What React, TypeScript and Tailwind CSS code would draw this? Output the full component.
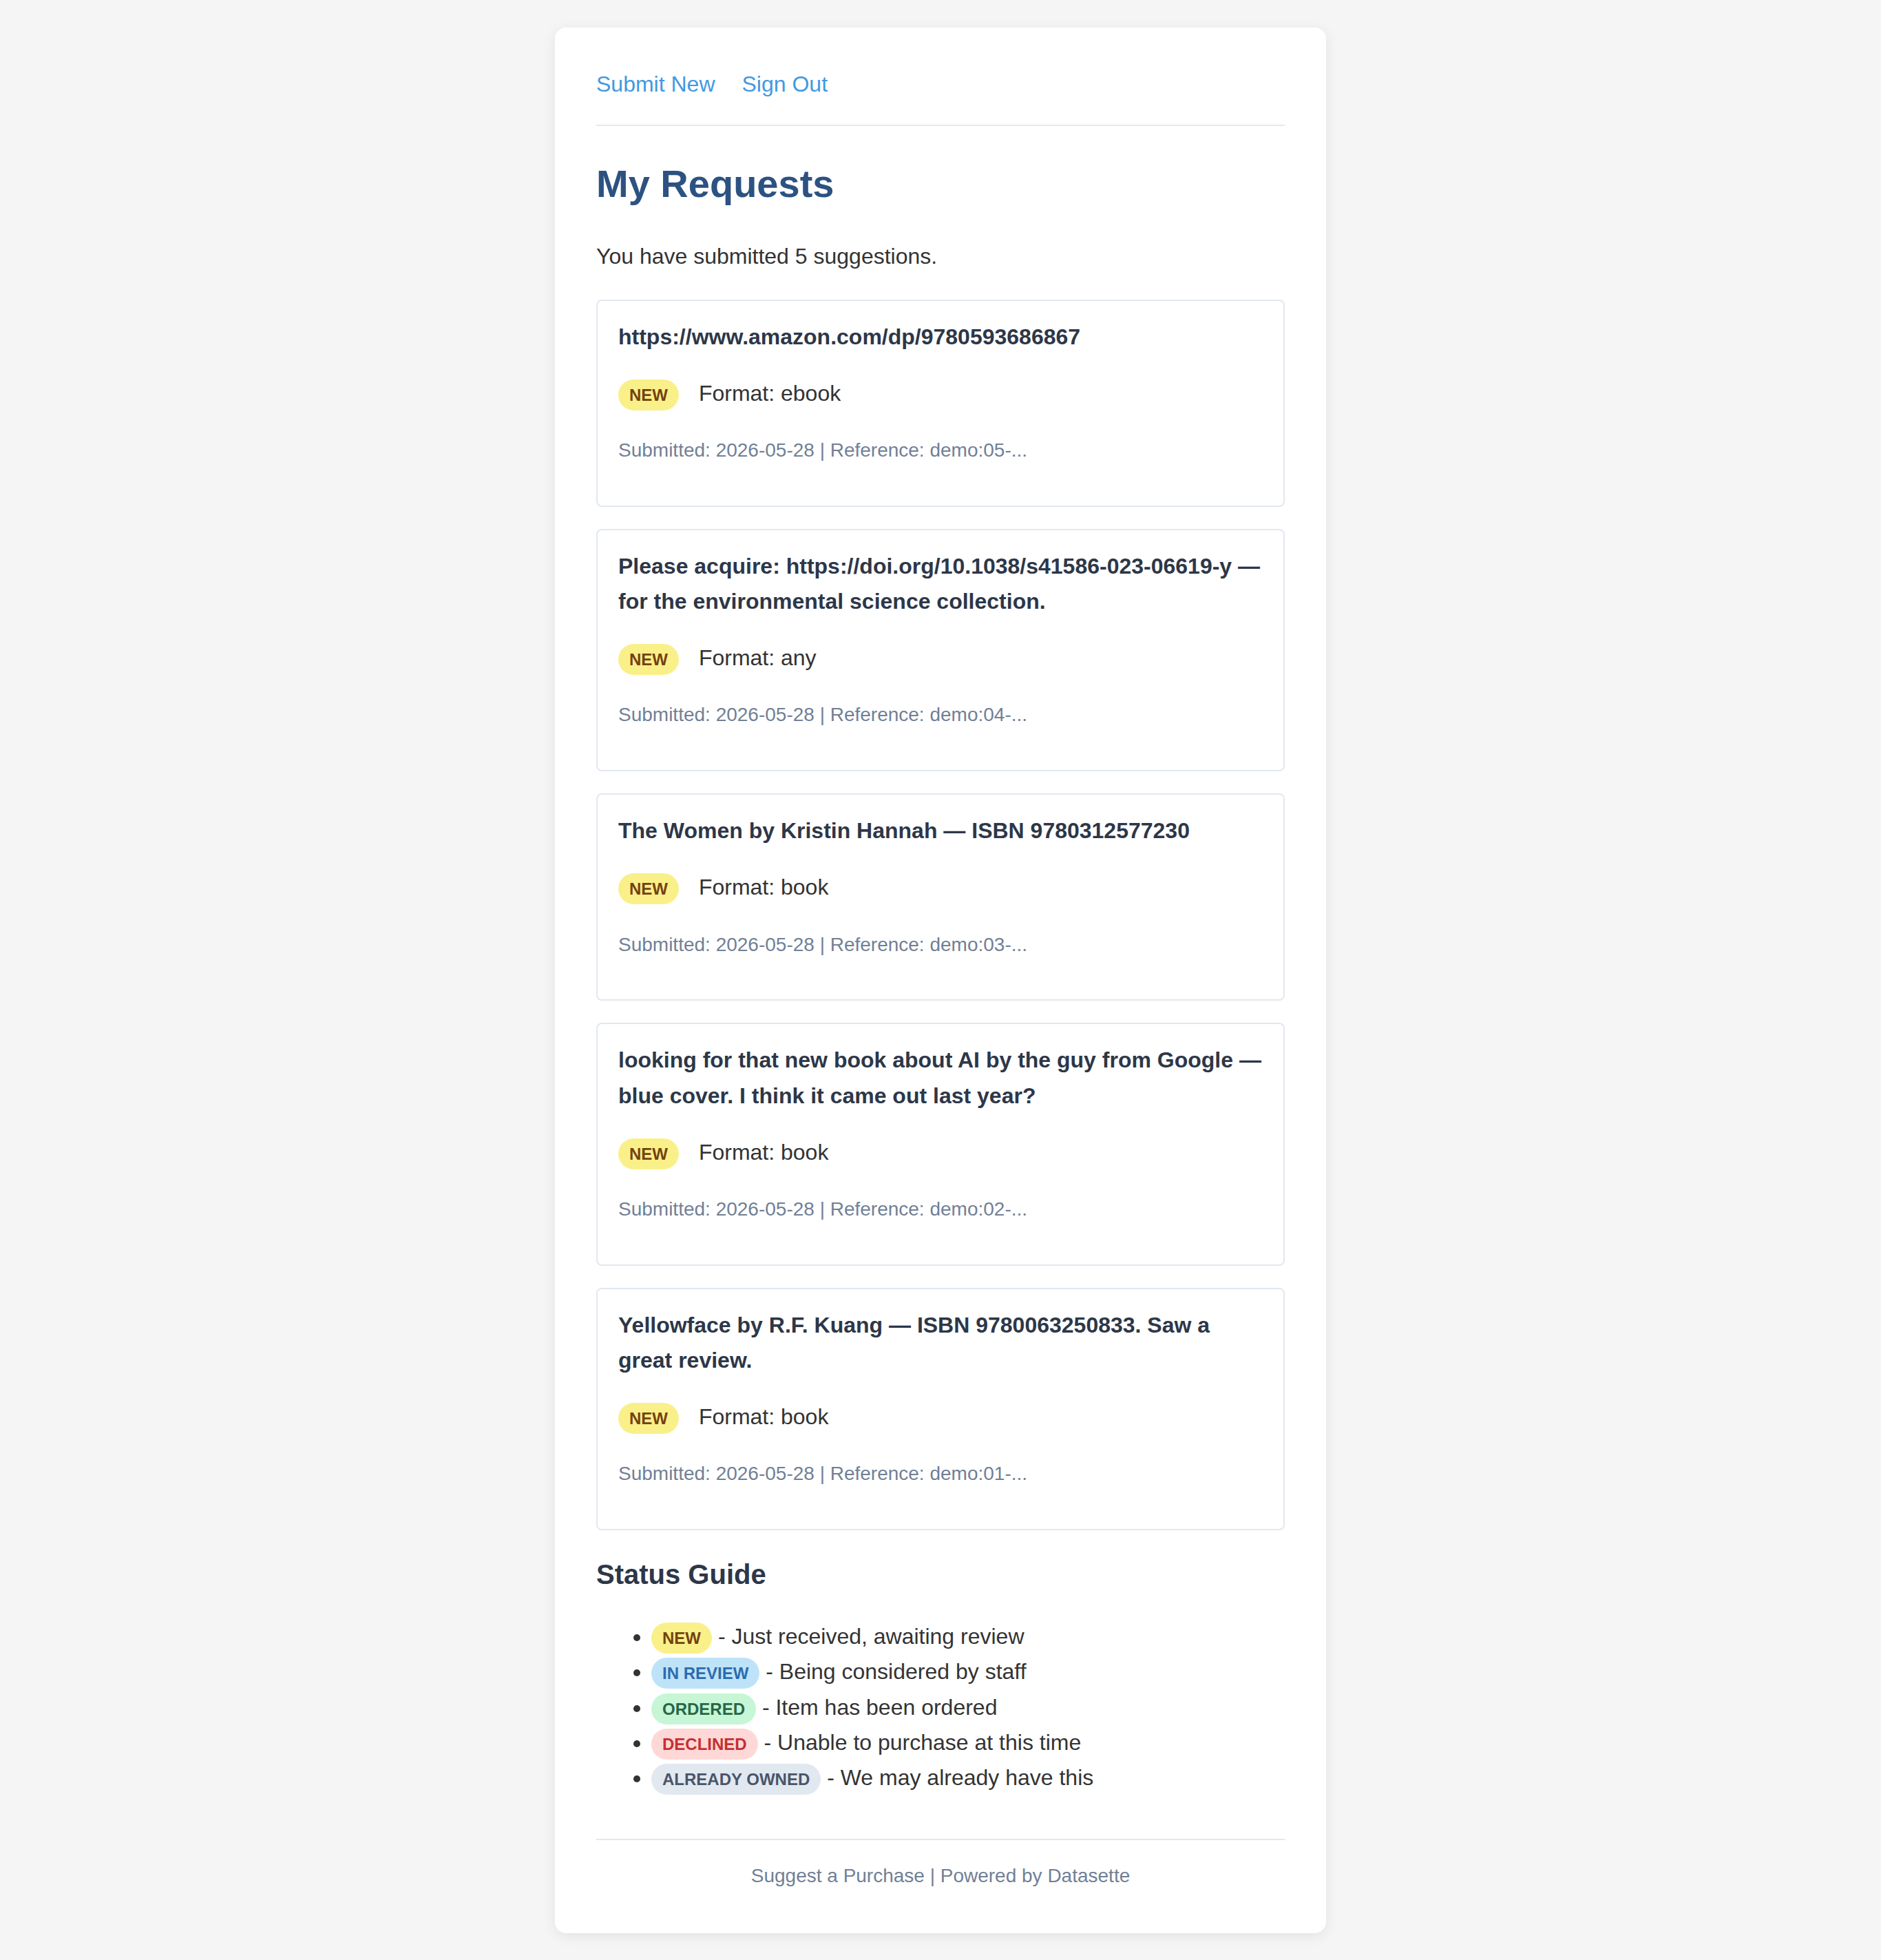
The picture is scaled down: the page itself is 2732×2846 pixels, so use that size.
import React from "react";

type Req = { title: string; format: string; ref: string };

const requests: Req[] = [
  { title: "https://www.amazon.com/dp/9780593686867", format: "ebook", ref: "demo:05-..." },
  {
    title:
      "Please acquire: https://doi.org/10.1038/s41586-023-06619-y \u2014 for the environmental science collection.",
    format: "any",
    ref: "demo:04-...",
  },
  { title: "The Women by Kristin Hannah \u2014 ISBN 9780312577230", format: "book", ref: "demo:03-..." },
  {
    title: "looking for that new book about AI by the guy from Google \u2014 blue cover. I think it came out last year?",
    format: "book",
    ref: "demo:02-...",
  },
  {
    title: "Yellowface by R.F. Kuang \u2014 ISBN 9780063250833. Saw a great review.",
    format: "book",
    ref: "demo:01-...",
  },
];

const badgeBase =
  "inline-block rounded-full px-[16px] py-[8px] text-[24px] leading-[29px] font-bold uppercase";

function NewBadge({ className = "" }: { className?: string }) {
  return <span className={`${badgeBase} bg-[#faf089] text-[#744210] ${className}`}>NEW</span>;
}

export default function App() {
  return (
    <div className="min-h-screen bg-[#f5f5f5] pt-[40px] pb-[40px] font-['Liberation_Sans',Arial,sans-serif] text-[#333333]">
      <div className="mx-auto w-[1120px] rounded-[16px] bg-white px-[60px] pt-[57px] pb-[60px] shadow-[0_4px_20px_rgba(0,0,0,0.08)]">
        <nav className="border-b-2 border-[#e2e8f0] pb-[33px] text-[32px] leading-[51.2px]">
          <a className="mr-[39px] text-[#4299e1]">Submit New</a>
          <a className="text-[#4299e1]">Sign Out</a>
        </nav>

        <h1 className="mt-[50px] text-[56px] leading-[67.2px] font-bold text-[#2c5282]">My Requests</h1>

        <p className="mt-[47px] text-[32px] leading-[51.2px]">You have submitted 5 suggestions.</p>

        <div className="mt-[36px] flex flex-col gap-[32px]">
          {requests.map((r) => (
            <div
              key={r.ref}
              className="rounded-[8px] border-2 border-[#e2e8f0] bg-white px-[30px] pt-[27px] pb-[57px]"
            >
              <div className="mb-[31px] text-[32px] leading-[51.2px] font-bold text-[#2d3748]">{r.title}</div>
              <div className="mb-[35px] text-[32px] leading-[51.2px] text-[#333333]">
                <NewBadge className="mr-[20px]" /> Format: {r.format}
              </div>
              <div className="text-[28px] leading-[44.8px] text-[#718096]">
                Submitted: 2026-05-28 | Reference: {r.ref}
              </div>
            </div>
          ))}
        </div>

        <h2 className="mt-[40px] text-[40px] leading-[48px] font-bold text-[#2d3748]">Status Guide</h2>

        <ul className="mt-[41px] list-disc pl-[80px] text-[32px] leading-[51.2px] text-[#333333]">
          <li>
            <span className={`${badgeBase} bg-[#faf089] text-[#744210]`}>NEW</span> - Just received, awaiting review
          </li>
          <li>
            <span className={`${badgeBase} bg-[#bee3f8] text-[#2b6cb0]`}>IN REVIEW</span> - Being considered by staff
          </li>
          <li>
            <span className={`${badgeBase} bg-[#c6f6d5] text-[#276749]`}>ORDERED</span> - Item has been ordered
          </li>
          <li>
            <span className={`${badgeBase} bg-[#fed7d7] text-[#c53030]`}>DECLINED</span> - Unable to purchase at this
            time
          </li>
          <li>
            <span className={`${badgeBase} bg-[#e2e8f0] text-[#4a5568]`}>ALREADY OWNED</span> - We may already have this
          </li>
        </ul>

        <footer className="mt-[63px] border-t-2 border-[#e2e8f0] pt-[30px] text-center text-[28px] leading-[44.8px] text-[#718096]">
          Suggest a Purchase | Powered by Datasette
        </footer>
      </div>
    </div>
  );
}
